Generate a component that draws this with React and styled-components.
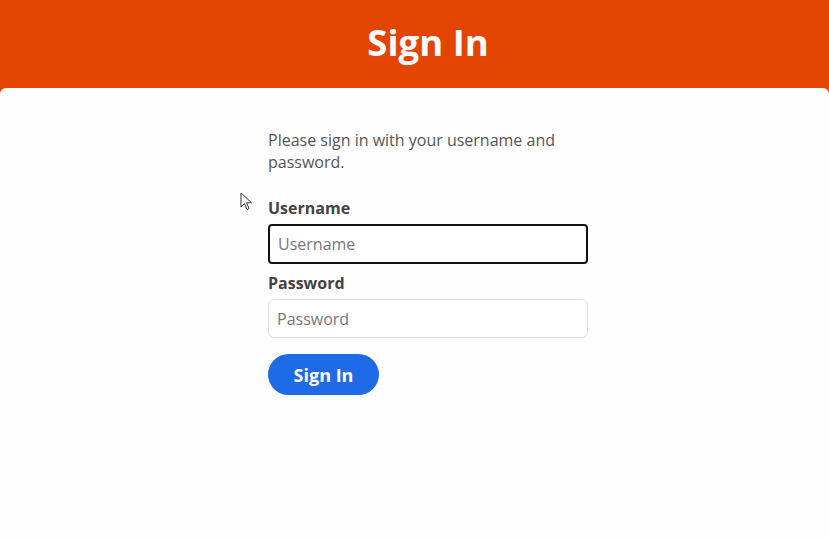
import React from 'react';
import styled, { createGlobalStyle } from 'styled-components';

const GlobalStyle = createGlobalStyle`
    html, body {
        margin: 0;
        padding: 0;
        background: #e34402;
    }
    body {
        font-family: "Open Sans", "Noto Sans", sans-serif;
    }
    * {
        box-sizing: border-box;
    }
`

const Page = styled.div`
    min-height: 539px;
    display: flex;
    flex-direction: column;
`
const Header = styled.header`
    height: 88px;
    background: #e34402;
    padding-left: 27px;
    display: flex;
    align-items: center;
    justify-content: center;
`
const Title = styled.h1`
    margin: 0;
    color: white;
    font-size: 36.5px;
    font-weight: 700;
    padding-bottom: 5px;
`
const Body = styled.main`
    flex: 1;
    position: relative;
    background: #fefefe;
    border-radius: 6px 6px 0 0;
    padding-top: 41px;
    padding-left: 27px;
    display: flex;
    justify-content: center;
`
const Form = styled.form`
    width: 320px;
    display: flex;
    flex-direction: column;
`
const Intro = styled.p`
    margin: 0 0 24px;
    font-size: 16px;
    line-height: 22px;
    color: #555;
`
const Label = styled.label`
    font-size: 16px;
    font-weight: 700;
    color: #444;
    line-height: 22px;
    margin-bottom: 5px;
`
const Input = styled.input`
    height: ${p => p.focused ? '40px' : '39px'};
    width: 100%;
    border: ${p => p.focused ? '2px solid #111' : '1px solid #dcdcdc'};
    border-radius: ${p => p.focused ? '4px' : '6px'};
    padding: 0 8px;
    font-family: inherit;
    font-size: 16px;
    color: #333;
    background: white;
    margin-bottom: ${p => p.focused ? '8px' : '16px'};
    outline: none;
    &::placeholder {
        color: #777;
    }
`
const Button = styled.button`
    align-self: flex-start;
    width: 111px;
    height: 41px;
    border: none;
    border-radius: 21px;
    background: #1f6ae6;
    color: white;
    font-family: inherit;
    font-size: 18px;
    font-weight: 700;
    cursor: pointer;
`
const Cursor = styled.svg`
    position: absolute;
    left: 240px;
    top: 104px;
`

export default function App() {
    return (
        <Page>
            <GlobalStyle />
            <Header>
                <Title>Sign In</Title>
            </Header>
            <Body>
                <Cursor width="14" height="20" viewBox="0 0 14 20">
                    <path d="M1 1 L1 15 L4.5 11.5 L7 17.5 L9 16.6 L6.6 10.8 L11.5 10.8 Z" fill="white" stroke="#333" strokeWidth="1" strokeLinejoin="round" />
                </Cursor>
                <Form onSubmit={e => e.preventDefault()}>
                    <Intro>Please sign in with your username and password.</Intro>
                    <Label htmlFor="username">Username</Label>
                    <Input id="username" focused placeholder="Username" />
                    <Label htmlFor="password">Password</Label>
                    <Input id="password" type="password" placeholder="Password" />
                    <Button type="submit">Sign In</Button>
                </Form>
            </Body>
        </Page>
    )
};
